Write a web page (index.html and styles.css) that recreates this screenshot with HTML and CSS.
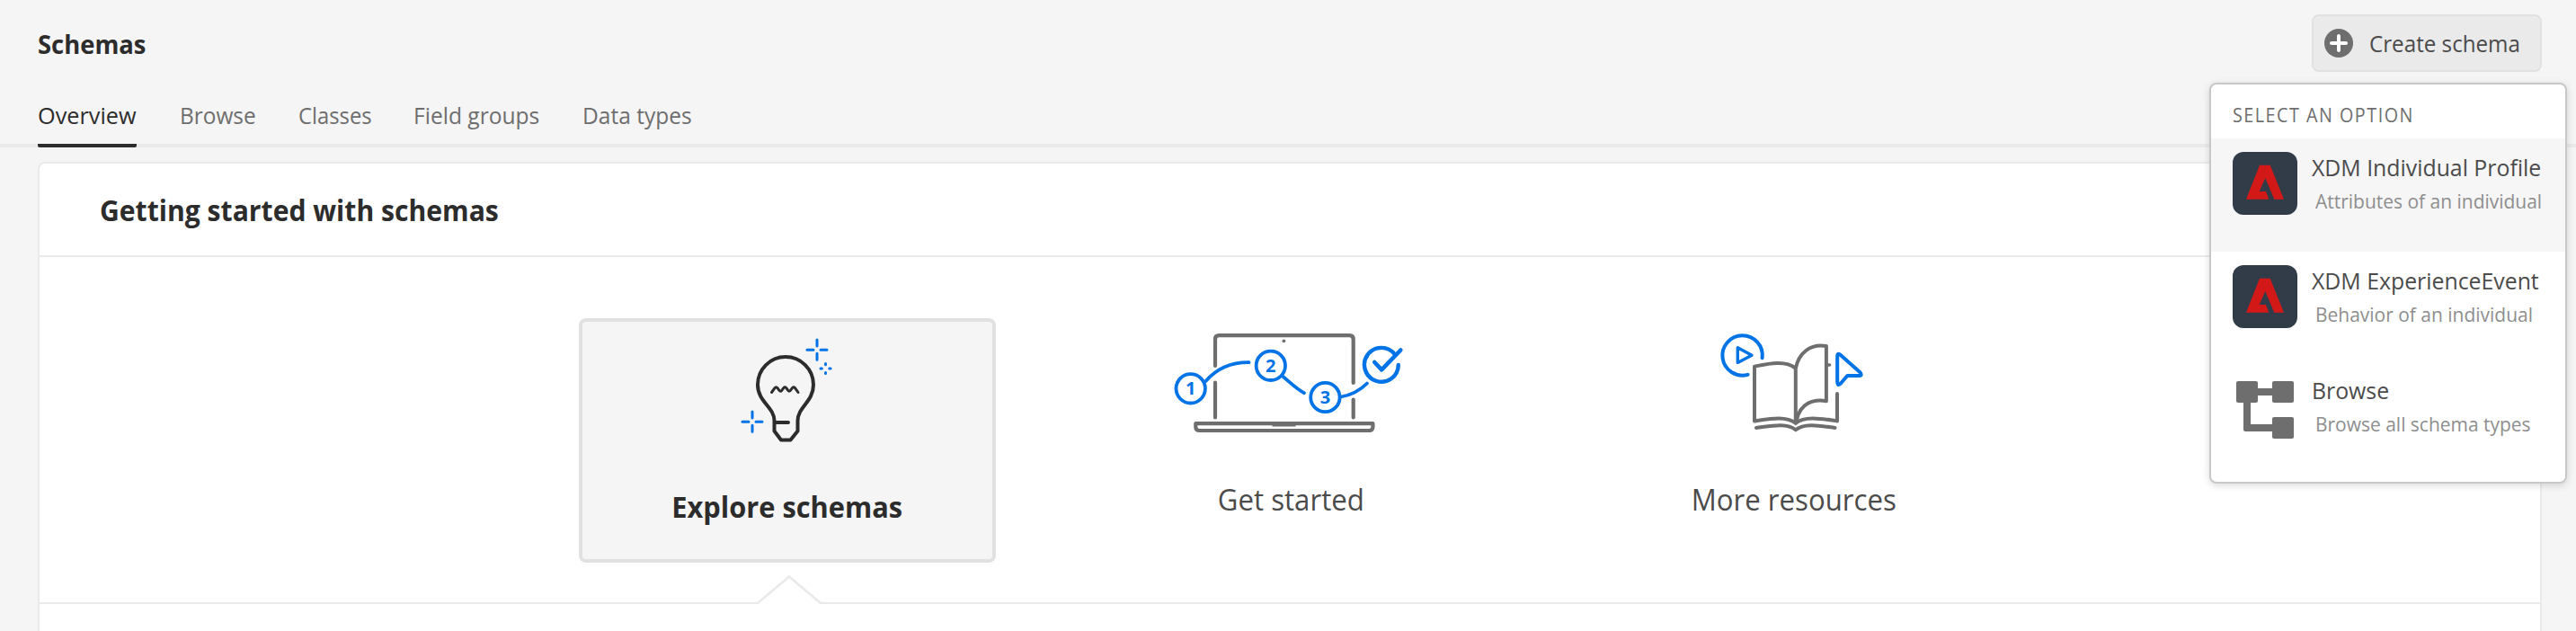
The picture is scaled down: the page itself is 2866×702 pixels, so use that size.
FILE: index.html
```
<!DOCTYPE html>
<html lang="en">
<head>
<meta charset="utf-8">
<title>Schemas</title>
<link rel="stylesheet" href="styles.css">
</head>
<body>
<header class="header">
  <h1 class="page-title">Schemas</h1>
  <div class="create">
    <button class="create-button" type="button">
      <svg class="create-icon" width="32" height="32" viewBox="0 0 32 32"><circle cx="16" cy="16" r="16" fill="#6e6e6e"/><path d="M16 8V24M8 16H24" stroke="#fff" stroke-width="4" stroke-linecap="round"/></svg>
      <span class="create-label">Create schema</span>
    </button>
    <div class="popover">
      <div class="popover-heading">SELECT AN OPTION</div>
      <div class="option option-active">
        <svg class="option-icon" width="72" height="70" viewBox="0 0 72 70"><rect width="72" height="70" rx="12" fill="#323c48"/><path d="M30 14.7H41.7L57 52.7H46.3L36.3 29L29.7 44H37L40.3 52.7H15Z" fill="#d31818"/></svg>
        <div class="option-text">
          <div class="option-title">XDM Individual Profile</div>
          <div class="option-sub">Attributes of an individual</div>
        </div>
      </div>
      <div class="option">
        <svg class="option-icon" width="72" height="70" viewBox="0 0 72 70"><rect width="72" height="70" rx="12" fill="#323c48"/><path d="M30 14.7H41.7L57 52.7H46.3L36.3 29L29.7 44H37L40.3 52.7H15Z" fill="#d31818"/></svg>
        <div class="option-text">
          <div class="option-title">XDM ExperienceEvent</div>
          <div class="option-sub">Behavior of an individual</div>
        </div>
      </div>
      <div class="option option-browse">
        <svg class="option-icon" width="72" height="70" viewBox="-4 -3 72 70"><g fill="#6e6e6e"><rect width="24" height="24" rx="2"/><rect x="40" width="24" height="24" rx="2"/><rect x="40" y="40" width="24" height="24" rx="2"/><path d="M23 8H41V16H23ZM8 23H16V48H41V56H10Q8 56 8 54Z"/></g></svg>
        <div class="option-text">
          <div class="option-title">Browse</div>
          <div class="option-sub">Browse all schema types</div>
        </div>
      </div>
    </div>
  </div>
</header>
<nav class="tabs">
  <a class="tab tab-overview tab-selected"><span class="tab-label">Overview</span></a>
  <a class="tab tab-browse"><span class="tab-label">Browse</span></a>
  <a class="tab tab-classes"><span class="tab-label">Classes</span></a>
  <a class="tab tab-groups"><span class="tab-label">Field groups</span></a>
  <a class="tab tab-types"><span class="tab-label">Data types</span></a>
</nav>
<main class="card">
  <div class="card-header"><h2 class="card-title">Getting started with schemas</h2></div>
  <div class="steps">
    <section class="step step-selected">
      <svg class="step-art" width="152" height="136" viewBox="0 -2 152 136" fill="none" stroke-linecap="round" stroke-linejoin="round">
        <g stroke="#2c2c2c" stroke-width="4">
          <path d="M43 68A31 31 0 0 1 105 68C105 87 87.5 93 87.5 108V119.5L79.5 129.5H69L61.5 119.5V108C61.5 93 43 87 43 68Z"/>
          <path d="M62 110H77"/>
          <path stroke-width="3" d="M58.5 76.5L62 71.7Q63.5 69.8 65 71.7L67 74.4Q68.3 76 69.7 74.4L71.8 71.6Q73.3 69.8 74.8 71.6L76.8 74.4Q78.1 76 79.4 74.4L81.5 71.6Q83 69.8 84.5 71.6L88 76.5"/>
        </g>
        <g stroke="#0073e6" stroke-width="3">
          <path d="M109 18V25M109 33.2V40.2M98 29.2H105M113 29.2H120"/>
          <path d="M37 98V105M37 113.2V120.2M26 109.2H33M41 109.2H48"/>
          <path d="M118.5 44.6V45.8M118.5 54.4V55.6M113 50.1H114.4M122.8 50.1H124.1"/>
        </g>
      </svg>
      <div class="step-label">Explore schemas</div>
    </section>
    <section class="step">
      <svg class="step-art" width="292" height="130" viewBox="0 8 292 130" fill="none" stroke-linecap="round" stroke-linejoin="round">
        <g stroke="#6e6e6e" stroke-width="4.2">
          <path d="M62 57V27.5Q62 23.2 66.3 23.2H211.4Q215.7 23.2 215.7 27.5V76M62 75.5V114.5M215.7 94.5V114.5"/>
          <path d="M40.3 121.2H237.4V125Q237.4 129 233 129H44.7Q40.3 129 40.3 125Z"/>
          <path stroke-width="1.4" d="M126 123.8H151"/>
        </g>
        <circle cx="138.4" cy="29.3" r="1.9" fill="#6e6e6e"/>
        <g stroke="#0073e6" stroke-width="3.8">
          <circle cx="34.7" cy="82.3" r="16.2"/><circle cx="123.8" cy="56.8" r="16.2"/><circle cx="184.4" cy="92" r="16.2"/>
          <path d="M51.5 74C62 62 76 53 99.5 53.2M137.5 69C146 76 152 82.5 161 87.2M202 91.5C213 89.5 223 84.5 231 76.5"/>
          <path stroke-width="4.4" d="M265.8 56A18.9 18.9 0 1 1 262.2 44.7"/>
          <path stroke-width="4.6" d="M239.3 53L247.2 61.3L268.3 39.5"/>
        </g>
        <g class="digit" text-anchor="middle"><text x="34.7" y="89.3">1</text><text x="123.8" y="63.8">2</text><text x="184.4" y="99">3</text></g>
      </svg>
      <div class="step-label">Get started</div>
    </section>
    <section class="step">
      <svg class="step-art" width="292" height="130" viewBox="-10 8 292 130" fill="none" stroke-linecap="round" stroke-linejoin="round">
        <g stroke="#6e6e6e" stroke-width="4">
          <path d="M137.8 60V120.8C127 112 108 116 92 118.4V57.6C108 54.5 127 50.5 137.8 60C141 43 154 32 171.9 35V96.2C157 93.5 143 99 139 117"/>
          <path d="M184 88V118.4C168 116 148 112 137.8 120.8"/>
          <path d="M173 56H175.5" stroke-width="3.6"/>
          <path d="M94 126C108 124.3 128 119.5 137.8 128.2C148 119.5 168 124.3 181.5 126"/>
        </g>
        <g stroke="#0073e6" stroke-width="4">
          <path d="M84.6 66.8A22.2 22.2 0 1 1 100.6 48.2"/>
          <path stroke-width="3.4" d="M73.3 36.7V53.4L89 45.2Z"/>
          <path d="M184.2 46Q184.2 42.3 187.2 44.6L209.5 64.3Q212.5 67.8 208.5 68H195.3L187.8 76.8Q184.2 79.8 184.2 75Z"/>
        </g>
      </svg>
      <div class="step-label">More resources</div>
    </section>
    <svg class="pointer" width="76" height="34" viewBox="0 0 76 34"><path d="M1 34V33L38 3L75 33V34Z" fill="#fff"/><path d="M0 33H3L38 3.5L73 33H76" fill="none" stroke="#eaeaea" stroke-width="2.6"/></svg>
  </div>
</main>
</body>
</html>
```
FILE: styles.css
```
* { box-sizing: border-box; }

body {
  margin: 0;
  height: 702px;
  overflow: hidden;
  display: flex;
  flex-direction: column;
  background: #f5f5f5;
  color: #2c2c2c;
  font-family: "Open Sans", "Noto Sans", sans-serif;
  font-size: 26px;
  white-space: nowrap;
}

h1, h2 { margin: 0; }

.header {
  display: flex;
  justify-content: space-between;
  align-items: flex-start;
  height: 104px;
  padding: 16px 38px 0 42px;
}

/* The interface type is slightly condensed; labels are narrowed with scaleX. */
.page-title {
  padding-top: 13px;
  font-size: 29px;
  line-height: 40px;
  font-weight: 700;
  transform: scaleX(0.945);
  transform-origin: left;
}

.create { position: relative; }

.create-button {
  display: flex;
  align-items: center;
  gap: 18px;
  width: 256px;
  height: 64px;
  padding: 0 0 0 12px;
  border: 2px solid #e1e1e1;
  border-radius: 8px;
  background: #eaeaea;
  color: #4b4b4b;
  font: 400 26px/60px "Open Sans", "Noto Sans", sans-serif;
}

.create-label {
  transform: scaleX(0.93);
  transform-origin: left;
}

.popover {
  position: absolute;
  z-index: 2;
  top: 76px;
  right: -28px;
  width: 398px;
  height: 446px;
  border: 2px solid #c8c8c8;
  border-radius: 8px;
  background: #fff;
  box-shadow: 0 2px 8px rgba(0, 0, 0, 0.15);
}

.popover-heading {
  height: 60px;
  padding: 14px 0 0 24px;
  color: #6e6e6e;
  font-size: 21px;
  line-height: 40px;
  letter-spacing: 1.6px;
  transform: scaleX(0.94);
  transform-origin: 24px 50%;
}

.option {
  display: flex;
  gap: 16px;
  height: 126px;
  padding: 15px 0 0 24px;
}

.option-active { background: #f6f6f6; }
.option-browse .option-text { margin-top: -4px; }
.option-icon { flex: none; }

.option-title {
  color: #4b4b4b;
  font-size: 26px;
  line-height: 34px;
  transform: scaleX(0.955);
  transform-origin: left;
}

.option-sub {
  padding-left: 4px;
  color: #8e8e8e;
  font-size: 22px;
  line-height: 40px;
  transform: scaleX(0.953);
  transform-origin: 4px 50%;
}

.tabs {
  display: flex;
  gap: 48px;
  height: 60px;
  padding: 0 42px;
  border-bottom: 4px solid #eaeaea;
}

.tab {
  height: 60px;
  color: #6e6e6e;
  line-height: 48px;
}

.tab-selected {
  z-index: 1;
  color: #2c2c2c;
  border-bottom: 4px solid #2c2c2c;
  border-radius: 2px;
}

.tab-label {
  display: inline-block;
  transform-origin: left;
}

.tab-overview { width: 110px; }
.tab-browse { width: 84px; }
.tab-classes { width: 80px; }
.tab-groups { width: 140px; }
.tab-types { width: 122px; }
.tab-overview .tab-label { transform: scaleX(0.972); }
.tab-browse .tab-label { transform: scaleX(0.938); }
.tab-classes .tab-label { transform: scaleX(0.915); }
.tab-groups .tab-label { transform: scaleX(0.945); }
.tab-types .tab-label { transform: scaleX(0.943); }

.card {
  flex: 1;
  margin: 16px 38px 0 42px;
  border: 2px solid #eaeaea;
  border-bottom: 0;
  border-radius: 8px 8px 0 0;
  background: #fff;
}

.card-header {
  height: 104px;
  padding: 28px 0 0 67px;
  border-bottom: 2px solid #eaeaea;
}

.card-title {
  font-size: 33px;
  line-height: 48px;
  font-weight: 700;
  transform: scaleX(0.913);
  transform-origin: left;
}

.steps {
  position: relative;
  display: flex;
  gap: 96px;
  height: 386px;
  padding: 68px 0 0 600px;
  border-bottom: 2px solid #eaeaea;
}

.step {
  display: flex;
  flex-direction: column;
  align-items: center;
  width: 464px;
  height: 272px;
  border: 4px solid transparent;
  border-radius: 8px;
}

.step-art { flex: none; }

.step-label {
  margin-top: 46px;
  color: #4b4b4b;
  font-size: 33px;
  line-height: 44px;
  transform: scaleX(0.944);
}

.step-selected {
  border-color: #e1e1e1;
  background: #f5f5f5;
}

.step-selected .step-label {
  margin-top: 48px;
  color: #2c2c2c;
  font-weight: 700;
  transform: scaleX(0.933);
}

.digit {
  fill: #0073e6;
  font-size: 20px;
  font-weight: 700;
}

.pointer {
  position: absolute;
  left: 796px;
  bottom: -2px;
}
```
